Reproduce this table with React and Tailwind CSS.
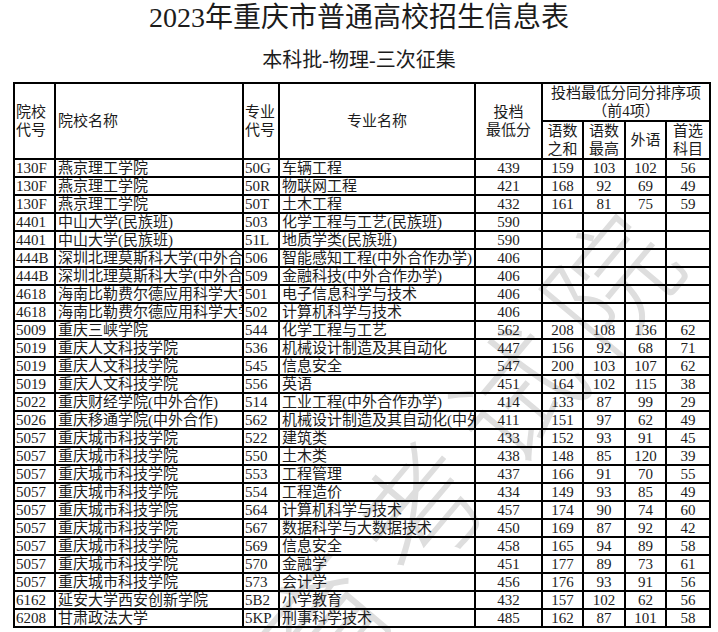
const rows = [
  ["130F", "燕京理工学院", "50G", "车辆工程", "439", "159", "103", "102", "56"],
  ["130F", "燕京理工学院", "50R", "物联网工程", "421", "168", "92", "69", "49"],
  ["130F", "燕京理工学院", "50T", "土木工程", "432", "161", "81", "75", "59"],
  ["4401", "中山大学(民族班)", "503", "化学工程与工艺(民族班)", "590", "", "", "", ""],
  ["4401", "中山大学(民族班)", "51L", "地质学类(民族班)", "590", "", "", "", ""],
  ["444B", "深圳北理莫斯科大学(中外合作办学)", "506", "智能感知工程(中外合作办学)", "406", "", "", "", ""],
  ["444B", "深圳北理莫斯科大学(中外合作办学)", "509", "金融科技(中外合作办学)", "406", "", "", "", ""],
  ["4618", "海南比勒费尔德应用科学大学", "501", "电子信息科学与技术", "406", "", "", "", ""],
  ["4618", "海南比勒费尔德应用科学大学", "502", "计算机科学与技术", "406", "", "", "", ""],
  ["5009", "重庆三峡学院", "544", "化学工程与工艺", "562", "208", "108", "136", "62"],
  ["5019", "重庆人文科技学院", "536", "机械设计制造及其自动化", "447", "156", "92", "68", "71"],
  ["5019", "重庆人文科技学院", "545", "信息安全", "547", "200", "103", "107", "62"],
  ["5019", "重庆人文科技学院", "556", "英语", "451", "164", "102", "115", "38"],
  ["5022", "重庆财经学院(中外合作)", "514", "工业工程(中外合作办学)", "414", "133", "87", "99", "29"],
  ["5026", "重庆移通学院(中外合作)", "562", "机械设计制造及其自动化(中外合作办学)", "411", "151", "97", "62", "49"],
  ["5057", "重庆城市科技学院", "522", "建筑类", "433", "152", "93", "91", "45"],
  ["5057", "重庆城市科技学院", "550", "土木类", "438", "148", "85", "120", "39"],
  ["5057", "重庆城市科技学院", "553", "工程管理", "437", "166", "91", "70", "55"],
  ["5057", "重庆城市科技学院", "554", "工程造价", "434", "149", "93", "85", "49"],
  ["5057", "重庆城市科技学院", "564", "计算机科学与技术", "457", "174", "90", "74", "60"],
  ["5057", "重庆城市科技学院", "567", "数据科学与大数据技术", "450", "169", "87", "92", "42"],
  ["5057", "重庆城市科技学院", "569", "信息安全", "458", "165", "94", "89", "58"],
  ["5057", "重庆城市科技学院", "570", "金融学", "451", "177", "89", "73", "61"],
  ["5057", "重庆城市科技学院", "573", "会计学", "456", "176", "93", "91", "56"],
  ["6162", "延安大学西安创新学院", "5B2", "小学教育", "432", "157", "102", "62", "56"],
  ["6208", "甘肃政法大学", "5KP", "刑事科学技术", "485", "162", "87", "101", "58"],
];

const cell = "border-2 border-black p-0 overflow-hidden whitespace-nowrap";

export default function App() {
  return (
    <div
      className="relative w-[718px] h-[632px] overflow-hidden bg-white text-[#1c1c1c]"
      style={{ fontFamily: '"Liberation Serif", "Noto Sans CJK SC", serif' }}
    >
      {/* watermark */}
      <div className="absolute left-[290px] top-[675px] pointer-events-none select-none">
        <div className="-translate-x-1/2 -translate-y-1/2 -rotate-[50deg] whitespace-nowrap text-[126px] leading-none font-light tracking-[22px] text-[#dedede]">
          重庆市教育考试院
        </div>
      </div>

      <div className="relative">
        <div className="h-9 text-center text-[28px] leading-9">2023年重庆市普通高校招生信息表</div>
        <div className="h-[48px] flex items-center justify-center text-[20px]">本科批-物理-三次征集</div>

        <table className="-mt-[2px] ml-[13px] w-[696px] table-fixed border-collapse border-2 border-black text-[15px] leading-4">
          <colgroup>
            <col className="w-[41px]" />
            <col className="w-[188px]" />
            <col className="w-[36px]" />
            <col className="w-[196px]" />
            <col className="w-[67px]" />
            <col className="w-[41px]" />
            <col className="w-[42px]" />
            <col className="w-[41px]" />
            <col className="w-[44px]" />
          </colgroup>
          <thead className="font-normal leading-[18px]">
            <tr className="h-[35px]">
              <th rowSpan={2} className={`${cell} text-left font-normal pl-[1px]`}>院校<br />代号</th>
              <th rowSpan={2} className={`${cell} text-left font-normal pl-[2px]`}>院校名称</th>
              <th rowSpan={2} className={`${cell} text-left font-normal pl-[1px]`}>专业<br />代号</th>
              <th rowSpan={2} className={`${cell} text-center font-normal`}>专业名称</th>
              <th rowSpan={2} className={`${cell} text-center font-normal`}>投档<br />最低分</th>
              <th colSpan={4} className={`${cell} text-center font-normal`}>投档最低分同分排序项<br />（前4项）</th>
            </tr>
            <tr className="h-[37px]">
              <th className={`${cell} text-center font-normal`}>语数<br />之和</th>
              <th className={`${cell} text-center font-normal`}>语数<br />最高</th>
              <th className={`${cell} text-center font-normal`}>外语</th>
              <th className={`${cell} text-center font-normal`}>首选<br />科目</th>
            </tr>
          </thead>
          <tbody>
            {rows.map((r, i) => (
              <tr key={i} className="h-[18px]">
                <td className={`${cell} pl-[1px]`}>{r[0]}</td>
                <td className={`${cell} pl-[2px]`}>{r[1]}</td>
                <td className={`${cell} pl-[1px]`}>{r[2]}</td>
                <td className={`${cell} pl-[2px]`}>{r[3]}</td>
                {r.slice(4).map((v, j) => (
                  <td key={j} className={`${cell} text-center`}>{v}</td>
                ))}
              </tr>
            ))}
          </tbody>
        </table>
      </div>
    </div>
  );
}
